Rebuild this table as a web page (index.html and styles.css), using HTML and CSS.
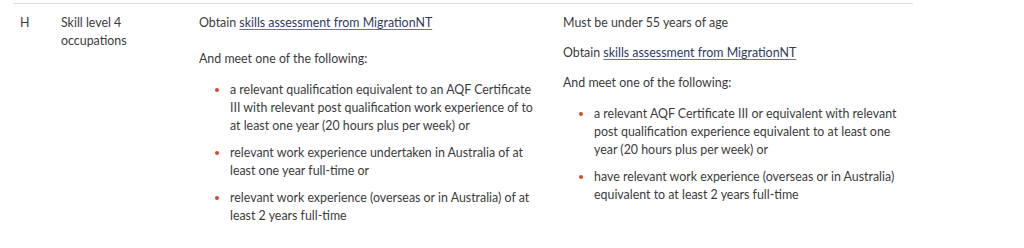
FILE: index.html
```html
<!DOCTYPE html>
<html lang="en">
<head>
<meta charset="utf-8">
<title>Skill level 4 occupations</title>
<link rel="stylesheet" href="styles.css">
</head>
<body>
<div class="table">
  <div class="cell cell-code">H</div>
  <div class="cell cell-name">Skill level 4 occupations</div>
  <div class="cell cell-req">
    <p class="para para-wide">Obtain <a class="link" href="#">skills assessment from MigrationNT</a></p>
    <p class="para">And meet one of the following:</p>
    <ul class="list">
      <li class="item">a relevant qualification equivalent to an AQF Certificate III with relevant post qualification work experience of to at least one year (20 hours plus per week) or</li>
      <li class="item">relevant work experience undertaken in Australia of at least one year full-time or</li>
      <li class="item">relevant work experience (overseas or in Australia) of at least 2 years full-time</li>
    </ul>
  </div>
  <div class="cell cell-req2">
    <p class="para">Must be under 55 years of age</p>
    <p class="para">Obtain <a class="link" href="#">skills assessment from MigrationNT</a></p>
    <p class="para">And meet one of the following:</p>
    <ul class="list">
      <li class="item">a relevant AQF Certificate III or equivalent with relevant post qualification experience equivalent to at least one year (20 hours plus per week) or</li>
      <li class="item">have relevant work experience (overseas or in Australia) equivalent to at least 2 years full-time</li>
    </ul>
  </div>
</div>
</body>
</html>
```
FILE: styles.css
```css
html, body {
  margin: 0;
  padding: 0;
  background: #ffffff;
}
body {
  font-family: Lato, "Open Sans", sans-serif;
  font-size: 12.4px;
  line-height: 18px;
  color: #3b3b3b;
}
.table {
  display: grid;
  grid-template-columns: 41px 138px 364px 357px;
  width: 900px;
  margin: 3px 0 0 13px;
  border-top: 1px solid #dcdcdc;
}
.cell {
  padding: 10px 7px 0 7px;
}
.cell-req {
  padding-right: 20px;
}
.para {
  margin: 0 0 12px 0;
}
.para-wide {
  margin-bottom: 17.5px;
}
.link {
  color: #2f3b5c;
  text-decoration: underline;
  text-decoration-color: #6f6fa8;
  text-underline-offset: 2px;
}
.list {
  list-style: none;
  margin: 13px 0 0 0;
  padding: 0 0 0 16px;
}
.item {
  display: flex;
  margin-bottom: 9px;
}
.item::before {
  content: "";
  flex: 0 0 4px;
  width: 4px;
  height: 4px;
  margin: 7px 11px 0 0;
  border-radius: 50%;
  background: #d9472b;
}
```
